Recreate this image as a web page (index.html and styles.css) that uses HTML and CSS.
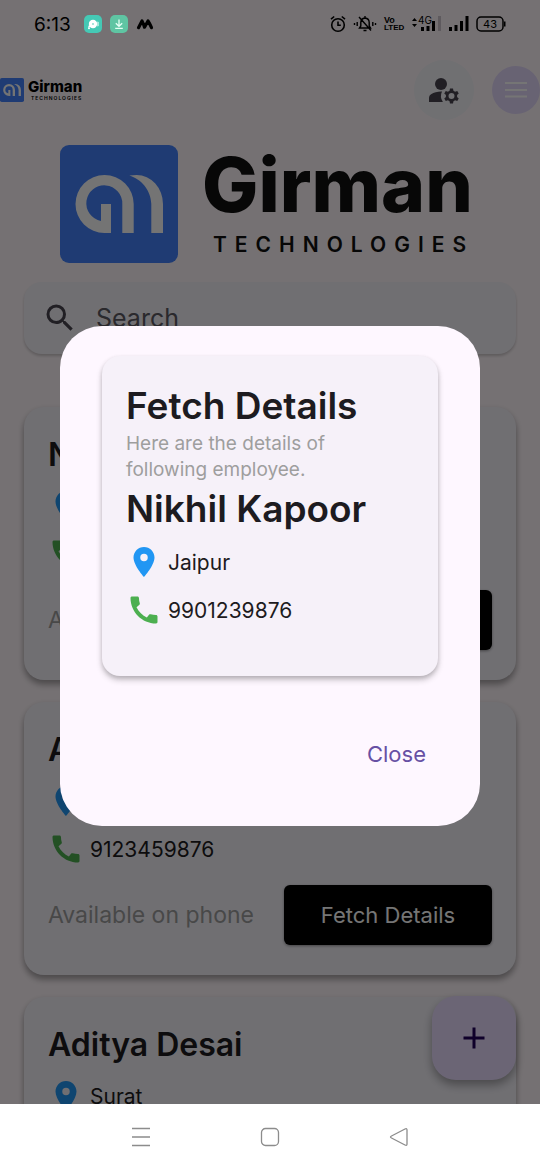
FILE: index.html
```html
<!DOCTYPE html>
<html lang="en">
<head>
<meta charset="utf-8">
<meta name="viewport" content="width=device-width, initial-scale=1">
<title>Girman Technologies</title>
<link rel="stylesheet" href="styles.css">
</head>
<body>
<svg class="defs" aria-hidden="true">
  <symbol id="mark" viewBox="0 0 118 118">
    <rect width="118" height="118" rx="9" fill="#4482fa"/>
    <path fill="#fdfdfd" d="M51 88H44.5A29 29 0 0 1 44.5 30A29.2 29 0 0 1 73.7 59V88H62.3V59A18 18 0 1 0 41 76V59H51ZM69.3 30.5Q73 30 76.7 30A26.3 29 0 0 1 103 59V88H91.3V59C91 45 81 34 69.3 30.5Z"/>
  </symbol>
  <symbol id="pin" viewBox="0 0 24 24"><path d="M12 2C8.13 2 5 5.13 5 9c0 5.25 7 13 7 13s7-7.75 7-13c0-3.87-3.13-7-7-7zm0 9.5a2.5 2.5 0 0 1 0-5 2.5 2.5 0 0 1 0 5z"/></symbol>
  <symbol id="phone" viewBox="0 0 24 24"><path d="M20.01 15.38c-1.23 0-2.42-.2-3.53-.56-.35-.12-.74-.03-1.01.24l-1.57 1.97c-2.83-1.35-5.48-3.9-6.89-6.83l1.95-1.66c.27-.28.35-.67.24-1.02-.37-1.11-.56-2.3-.56-3.53 0-.54-.45-.99-.99-.99H4.19C3.65 3 3 3.24 3 3.99 3 13.28 10.73 21 20.01 21c.71 0 .99-.63.99-1.18v-3.45c0-.54-.45-.99-.99-.99z"/></symbol>
</svg>

<header class="status">
  <time class="clock">6:13</time>
  <span class="notices">
    <svg width="18" height="18" viewBox="0 0 18 18"><rect width="18" height="18" rx="5" fill="#45c9b5"/><path d="M13 6.5l2 .5v4l-2 .5z" fill="#a5e8dc"/><circle cx="9" cy="9" r="4.2" fill="#fff"/><path d="M5 10l-1 2.500 3-.5z" fill="#fff"/><circle cx="5" cy="13.300" r="1" fill="#fff"/><circle cx="9" cy="9" r="1" fill="#8cdccf"/></svg>
    <svg width="18" height="18" viewBox="0 0 18 18"><rect width="18" height="18" rx="5" fill="#5fc5a3"/><path d="M9 4.500v6.500M5.800 8.200L9 11.300l3.200-3.100M5.200 13.400h7.600" fill="none" stroke="#e5fff5" stroke-width="1.300"/></svg>
    <svg width="18" height="18" viewBox="0 0 18 18"><path d="M2.500 12.700L6 6q1.600 3 2.500 6.200L12 6q2 3 3.500 6.700" fill="none" stroke="#000" stroke-width="3.200" stroke-linecap="round" stroke-linejoin="round"/></svg>
  </span>
  <span class="signals">
    <svg width="16" height="18" viewBox="0 0 16 18"><g fill="none" stroke="#000" stroke-width="1.600"><circle cx="8" cy="10" r="6.300"/><path d="M8 6.500V10.300h2.800M1 4.200L4.200 1.500M15 4.200L11.800 1.500"/></g></svg>
    <svg width="24" height="18" viewBox="0 0 24 18"><g fill="none" stroke="#000" stroke-width="1.400"><path d="M6.500 13h11l-1.300-2V7.500q0-4-4.200-4.500-4.200.5-4.200 4.500V11zM12 1v2M10.500 15.500h3M6 2l12 13.500M4.200 7v4M1.500 8v2M19.800 7v4M22.500 8v2"/></g></svg>
    <span class="volte"><span>Vo</span><span>LTED</span></span>
    <svg width="30" height="18" viewBox="0 0 30 18"><path d="M1 6l2.500-3L6 6zM1 9l2.500 3L6 9z"/><text x="7" y="9" class="net">4G</text><path d="M10 12h3v4h-3zM15.500 11h3v5h-3zM21 6h3v10h-3z"/><path d="M27 1h3v15h-3z" fill="#5e5a5e"/></svg>
    <svg width="21" height="18" viewBox="0 0 21 18"><path d="M1 12h3v4H1zM6.500 10h3v6h-3zM12 6h3v10h-3zM17.500 1h3v15h-3z"/></svg>
    <svg width="30" height="18" viewBox="0 0 30 18"><rect x="1" y="2" width="26" height="14" rx="4" fill="none" stroke="#000" stroke-width="1.500"/><path d="M28 6.500h1.500v5H28z"/><text x="14" y="13" text-anchor="middle" class="level">43</text></svg>
  </span>
</header>

<div class="app">
  <header class="appbar">
    <svg class="brand" viewBox="0 0 84 24" role="img" aria-label="Girman Technologies"><use href="#mark" width="24" height="24"/><text x="28" y="14" class="brand-name">Girman</text><text x="31" y="22" class="brand-sub">TECHNOLOGIES</text></svg>
    <button class="round admin" aria-label="Manage account"><svg width="36" height="36" viewBox="0 0 24 24"><circle cx="10" cy="8" r="4"/><path d="M10.670 13.020C10.450 13.010 10.230 13 10 13c-2.420 0-4.680.670-6.610 1.820-.880.520-1.390 1.500-1.390 2.530V20h9.260a6.960 6.960 0 0 1-.590-6.980zM20.750 16c0-.220-.030-.420-.060-.630l1.140-1.010-1-1.730-1.450.490a3.800 3.800 0 0 0-1.080-.630L18 11h-2l-.3 1.490c-.4.150-.760.360-1.080.630l-1.450-.490-1 1.730 1.140 1.010a4 4 0 0 0 0 1.260l-1.140 1.010 1 1.730 1.450-.490c.320.270.680.480 1.080.630L16 21h2l.3-1.490c.4-.150.760-.360 1.080-.630l1.450.490 1-1.730-1.140-1.010c.030-.210.060-.410.060-.630zM17 18a2 2 0 1 1 0-4 2 2 0 0 1 0 4z"/></svg></button>
    <button class="round menu" aria-label="Open menu"><svg width="36" height="36" viewBox="0 0 36 36"><path d="M7 11h22M7 18h22M7 24.500h22" stroke="#fff" stroke-width="2"/></svg></button>
  </header>

  <main class="content">
    <svg class="hero" viewBox="0 0 420 118" role="img" aria-label="Girman Technologies"><use href="#mark" width="118" height="118"/><text x="142" y="67" class="hero-name">Girman</text><text x="153" y="107" class="hero-sub">TECHNOLOGIES</text></svg>

    <label class="search">
      <svg width="36" height="36" viewBox="0 0 24 24"><path d="M15.500 14h-.790l-.280-.270A6.470 6.470 0 0 0 16 9.500 6.500 6.500 0 1 0 9.500 16c1.610 0 3.090-.590 4.230-1.570l.270.280v.790l5 4.990L20.490 19zm-6 0a4.500 4.500 0 1 1 0-9 4.500 4.500 0 0 1 0 9z"/></svg>
      <input type="search" placeholder="Search" aria-label="Search">
    </label>

    <section class="list">
      <article class="card">
        <h2>Nikhil Kapoor</h2>
        <p class="row"><svg class="icon pin"><use href="#pin"/></svg>Jaipur</p>
        <p class="row"><svg class="icon phone"><use href="#phone"/></svg>9901239876</p>
        <div class="actions"><span>Available on phone</span><button>Fetch Details</button></div>
      </article>
      <article class="card">
        <h2>A</h2>
        <p class="row"><svg class="icon pin"><use href="#pin"/></svg></p>
        <p class="row"><svg class="icon phone"><use href="#phone"/></svg>9123459876</p>
        <div class="actions"><span>Available on phone</span><button>Fetch Details</button></div>
      </article>
      <article class="card">
        <h2>Aditya Desai</h2>
        <p class="row"><svg class="icon pin"><use href="#pin"/></svg>Surat</p>
      </article>
    </section>
  </main>

  <button class="fab" aria-label="Add employee"><svg width="36" height="36" viewBox="0 0 24 24"><path d="M19 13h-6v6h-2v-6H5v-2h6V5h2v6h6z"/></svg></button>

  <div class="scrim">
    <section class="dialog" role="dialog" aria-modal="true" aria-labelledby="dialog-title">
      <div class="details">
        <h1 id="dialog-title">Fetch Details</h1>
        <p class="hint">Here are the details of<br>following employee.</p>
        <h1>Nikhil Kapoor</h1>
        <p class="row"><svg class="icon pin"><use href="#pin"/></svg>Jaipur</p>
        <p class="row"><svg class="icon phone"><use href="#phone"/></svg>9901239876</p>
      </div>
      <button class="close">Close</button>
    </section>
  </div>
</div>

<nav class="system">
  <button aria-label="Recent apps"><svg width="20" height="20" viewBox="0 0 20 20"><path d="M1 1.500h18M1 10h18M1 18.500h18"/></svg></button>
  <button aria-label="Home"><svg width="20" height="20" viewBox="0 0 20 20"><rect x="1.500" y="1.500" width="17" height="17" rx="4"/></svg></button>
  <button aria-label="Back"><svg width="20" height="20" viewBox="0 0 20 20"><path d="M18 3v14q0 2-2 1L2.500 11q-2-1 0-2L16 2q2-1 2 1z"/></svg></button>
</nav>
</body>
</html>
```
FILE: styles.css
```css
* {
  box-sizing: border-box;
  margin: 0;
}

body {
  display: grid;
  grid-template-rows: minmax(0, 1fr) auto;
  height: 100vh;
  font-family: Inter, "Open Sans", sans-serif;
  color: #1d1b20;
  background: #fff;
}

button {
  padding: 0;
  border: 0;
  background: none;
  font: inherit;
  color: inherit;
}

svg {
  flex: none;
  overflow: visible;
}

.defs {
  position: absolute;
  width: 0;
  height: 0;
}

/* System status bar, drawn over the dimmed app */
.status {
  position: absolute;
  z-index: 3;
  top: 0;
  left: 0;
  right: 0;
  display: flex;
  align-items: center;
  height: 48px;
  padding: 0 34px;
  color: #000;
}

.clock {
  font-size: 19px;
  width: 50px;
}

.notices,
.signals {
  display: flex;
  align-items: center;
  gap: 8px;
}

.signals {
  margin-left: auto;
  gap: 7px;
}

.volte {
  display: flex;
  flex-direction: column;
  font: 700 9px/8px "Liberation Sans", sans-serif;
  width: 20px;
}

.volte span + span {
  font-size: 8px;
}

.net {
  font: 10px Inter, sans-serif;
}

.level {
  font: 11px Inter, sans-serif;
}

/* App */
.app {
  position: relative;
  display: flex;
  flex-direction: column;
  padding-top: 48px;
  overflow: hidden;
  background: #fff7fb;
}

.appbar {
  display: flex;
  align-items: center;
  flex: none;
  height: 84px;
  gap: 18px;
}

.brand {
  width: 84px;
  height: 24px;
  margin-right: auto;
}

.brand-name {
  font: 800 15px Inter, sans-serif;
}

.brand-sub {
  font: 600 5px Inter, sans-serif;
  letter-spacing: 1px;
}

.round {
  display: grid;
  place-items: center;
  width: 60px;
  height: 60px;
  border-radius: 50%;
  background: #f3f3f8;
}

.admin {
  fill: #49454f;
}

.menu {
  width: 48px;
  height: 48px;
  background: #e3d8fa;
}

.content {
  display: flex;
  flex-direction: column;
  padding: 13px 24px 0;
}

.hero {
  margin: 0 36px;
  height: auto;
}

.hero-name {
  font: 800 75px Inter, sans-serif;
  fill: #111;
}

.hero-sub {
  font: 600 21px Inter, sans-serif;
  letter-spacing: 8px;
  fill: #111;
}

.search {
  display: flex;
  align-items: center;
  gap: 18px;
  height: 72px;
  margin-top: 19px;
  padding: 0 18px;
  border-radius: 18px;
  background: #f4f2f9;
  box-shadow: 0 2px 3px #0003;
  fill: #49454f;
}

.search input {
  flex: 1;
  min-width: 0;
  padding: 0;
  border: 0;
  outline: 0;
  background: none;
  font: 25px Inter, sans-serif;
}

.search input::placeholder {
  color: #5d5963;
}

.list {
  display: flex;
  flex-direction: column;
  gap: 22px;
  padding-top: 53px;
}

.card {
  min-height: 273px;
  padding: 24px 24px 30px;
  border-radius: 20px;
  background: #f4f2f9;
  box-shadow: 0 5px 6px #0004, 0 2px 6px #0002;
}

.card h2 {
  margin-bottom: 3px;
  font-size: 32px;
  line-height: 48px;
  font-weight: 600;
}

.row {
  display: flex;
  align-items: center;
  gap: 6px;
  height: 48px;
  font-size: 21px;
}

.icon {
  width: 36px;
  height: 36px;
}

.pin {
  fill: #2196f3;
}

.phone {
  fill: #4caf50;
}

.actions {
  display: flex;
  align-items: center;
  justify-content: space-between;
  margin-top: 12px;
  font-size: 23px;
  color: #9e9e9e;
}

.actions button {
  width: 208px;
  height: 60px;
  border-radius: 6px;
  background: #000;
  color: #fff;
  font-size: 22px;
  box-shadow: 0 1px 3px #0006;
}

.fab {
  position: absolute;
  right: 24px;
  bottom: 24px;
  display: grid;
  place-items: center;
  width: 84px;
  height: 84px;
  border-radius: 24px;
  background: #eaddff;
  fill: #21005d;
  box-shadow: 0 5px 10px #0005;
}

/* Modal */
.scrim {
  position: absolute;
  z-index: 2;
  inset: 0;
  display: grid;
  place-items: center;
  padding: 48px 60px 0;
  background: rgb(0 0 0 / 54%);
}

.dialog {
  display: flex;
  flex-direction: column;
  width: 100%;
  padding: 30px 42px 42px;
  border-radius: 42px;
  background: #fef7ff;
}

.details {
  padding: 24px 24px 42px;
  border-radius: 18px;
  background: #f6f1f9;
  box-shadow: 0 4px 6px #0003, 0 2px 4px #0002;
}

.details h1 {
  font-size: 37px;
  line-height: 51px;
  font-weight: 600;
  white-space: nowrap;
}

.details h1 + .row {
  margin-top: 4px;
}

.hint {
  font-size: 19px;
  line-height: 26px;
  color: #9e9e9e;
}

.close {
  align-self: flex-end;
  height: 60px;
  margin-top: 48px;
  padding: 0 12px;
  font-size: 22px;
  color: #6750a4;
}

/* System navigation */
.system {
  display: grid;
  grid-template-columns: repeat(3, 1fr);
  height: 66px;
  padding: 0 76px;
  background: #fff;
}

.system button {
  display: grid;
  place-items: center;
}

.system svg {
  fill: none;
  stroke: #8c8c8c;
  stroke-width: 1.3px;
}
```
